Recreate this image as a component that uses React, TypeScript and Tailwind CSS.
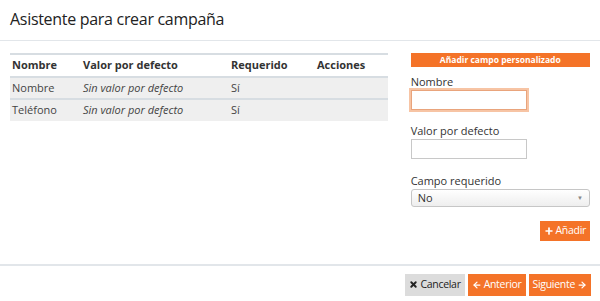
import { ArrowLeft, ArrowRight, Plus, X } from "lucide-react";

const rows = [
  { name: "Nombre", value: "Sin valor por defecto", req: "Sí" },
  { name: "Teléfono", value: "Sin valor por defecto", req: "Sí" },
];

export default function App() {
  return (
    <div className="h-[301px] w-[600px] bg-white text-[#333] font-['Open_Sans','Noto_Sans',sans-serif]">
      <div className="flex h-[41px] items-center border-b border-[#e2e6ea] px-[10px] pb-[2px]">
        <h1 className="text-[16px] leading-none tracking-[-0.3px] text-[#222]">Asistente para crear campaña</h1>
      </div>

      <div className="flex h-[223px] gap-[23px] px-[10px] pt-[12px]">
        <table className="h-fit w-[379px] border-collapse border-t-2 border-[#d7dde2] text-left text-[11px]">
          <thead>
            <tr className="h-[23px] border-b-2 border-[#d7dde2]">
              <th className="w-[73px] pl-[2px] font-bold">Nombre</th>
              <th className="w-[148px] font-bold">Valor por defecto</th>
              <th className="w-[86px] font-bold">Requerido</th>
              <th className="font-bold">Acciones</th>
            </tr>
          </thead>
          <tbody>
            {rows.map((r) => (
              <tr key={r.name} className="h-[22px] border-b-2 border-[#d7dde2] bg-[#efefef] last:border-b-0 text-[#444]">
                <td className="pl-[2px]">{r.name}</td>
                <td className="italic">{r.value}</td>
                <td>{r.req}</td>
                <td></td>
              </tr>
            ))}
          </tbody>
        </table>

        <div className="flex w-[180px] flex-col">
          <div className="flex h-[14px] items-center justify-center bg-[#f47328] text-[8.5px] font-bold text-white">
            Añadir campo personalizado
          </div>
          <label className="mt-[7px] text-[11px] leading-[16px] text-[#333]">Nombre</label>
          <input className="h-[20px] w-[116px] border border-[#e9a47c] bg-white px-1 text-[11px] shadow-[0_0_0_2px_#f7c4a4] outline-none" autoFocus />
          <label className="mt-[13px] text-[11px] leading-[16px] text-[#333]">Valor por defecto</label>
          <input className="h-[20px] w-[116px] border border-[#c8c8c8] bg-white px-1 text-[11px] outline-none" />
          <label className="mt-[14px] text-[11px] leading-[16px] text-[#333]">Campo requerido</label>
          <div className="flex h-[18px] items-center justify-between rounded-[3px] border border-[#c6c6c6] bg-gradient-to-b from-white to-[#eeeeee] px-[6px] text-[11px]">
            <span>No</span>
            <span className="text-[6px] text-[#888]">▼</span>
          </div>
          <div className="mt-[14px] flex justify-end">
            <button className="flex h-[20px] items-center gap-[2px] bg-[#f47328] px-[4px] text-[10.5px] tracking-[-0.3px] text-white">
              <Plus size={10} strokeWidth={4} />
              Añadir
            </button>
          </div>
        </div>
      </div>

      <div className="flex h-[37px] items-center justify-end gap-[3px] border-t-2 border-[#e2e6ea] pr-[9px] pt-[2px] text-[10.5px] tracking-[-0.3px]">
        <button className="flex h-[22px] items-center gap-[2px] bg-[#dcdcdc] px-[4px] text-[#222]">
          <X size={9} strokeWidth={5} />
          Cancelar
        </button>
        <button className="flex h-[22px] items-center gap-[2px] bg-[#f47328] px-[4px] text-white">
          <ArrowLeft size={10} strokeWidth={3} />
          Anterior
        </button>
        <button className="flex h-[22px] items-center gap-[2px] bg-[#f47328] px-[4px] text-white">
          Siguiente
          <ArrowRight size={10} strokeWidth={3} />
        </button>
      </div>
    </div>
  );
}
